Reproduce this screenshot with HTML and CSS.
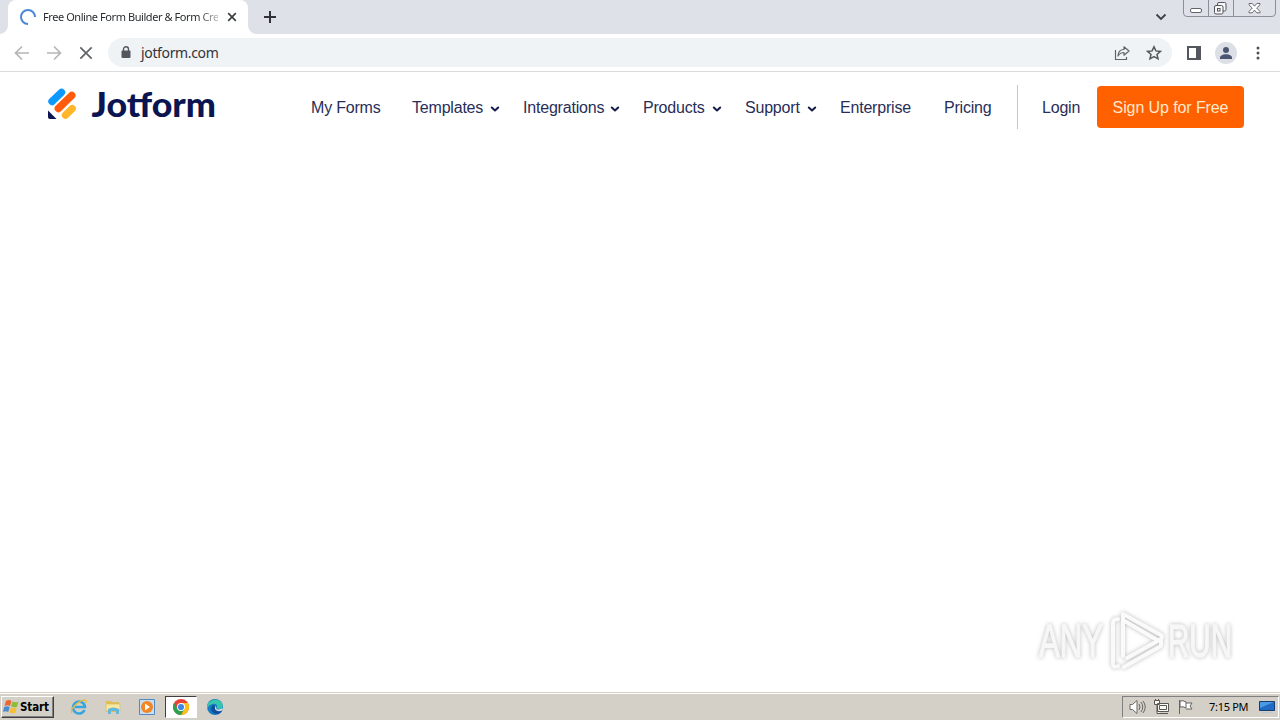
FILE: index.html
```html
<!DOCTYPE html>
<html lang="en"><head><meta charset="utf-8"><title>Jotform</title><link rel="stylesheet" href="styles.css"></head>
<body>
<div class="desktop">
<header class="tabs">
  <div class="tab">
    <svg class="spinner" width="18" height="18" viewBox="0 0 18 18"><path d="M9 16A7 7 0 1 1 16 9" fill="none" stroke="#4b87d9" stroke-width="2"/></svg>
    <span class="tab-title">Free Online Form Builder &amp; Form Cre</span>
    <svg width="10" height="10" viewBox="0 0 10 10"><path d="M1.200 1.200l7.600 7.600M8.800 1.200L1.200 8.800" stroke="#3c4043" stroke-width="1.700"/></svg>
  </div>
  <svg class="plus" width="14" height="14" viewBox="0 0 14 14"><path d="M7 1v12M1 7h12" stroke="#303238" stroke-width="2"/></svg>
  <svg class="tab-menu" width="12" height="8" viewBox="0 0 12 8"><path d="M1.500 1.500L6 6l4.500-4.500" fill="none" stroke="#3c4043" stroke-width="1.800"/></svg>
  <svg class="controls" width="94" height="18" viewBox="0 0 94 18">
    <path d="M.5 0v13q0 3.500 3.500 3.500h85q3.500 0 3.500-3.500V0M25.500 0v16M50.500 0v16" fill="none" stroke="#8b8f98"/>
    <rect x="7.500" y="8.500" width="11" height="4" rx="1.500" fill="#fff" stroke="#60646c"/>
    <g fill="#f7f7f8" stroke="#50545c"><rect x="34.500" y="2.500" width="8.500" height="8.500" rx="1.500"/><rect x="31.500" y="5.500" width="8.500" height="8.500" rx="1.500"/><rect x="34.500" y="8.500" width="2.500" height="2.500"/></g>
    <path d="M66 3.500h3.200l2.300 2.700 2.300-2.700H77v1.300L73.700 8l3.300 3.500v1.300h-3.200l-2.300-2.700-2.300 2.700H66v-1.300L69.300 8 66 4.800z" fill="#fff" stroke="#666a72"/>
  </svg>
</header>
<div class="toolbar">
  <div class="nav-buttons">
    <svg width="16" height="16" viewBox="0 0 16 16"><path d="M15 8H2M8 1.500L1.500 8 8 14.500" fill="none" stroke="#b5b6b8" stroke-width="1.700"/></svg>
    <svg width="16" height="16" viewBox="0 0 16 16"><path d="M1 8h13M8 1.500L14.500 8 8 14.500" fill="none" stroke="#b5b6b8" stroke-width="1.700"/></svg>
    <svg width="16" height="16" viewBox="0 0 16 16"><path d="M2.300 2.300l11.400 11.400M13.700 2.300L2.300 13.700" stroke="#5f6368" stroke-width="1.700"/></svg>
  </div>
  <div class="address">
    <svg width="10" height="13" viewBox="0 0 10 13"><rect x=".5" y="4.500" width="9" height="7.500" rx="1" fill="#54585e"/><path d="M2.500 5V3.200a2.500 2.500 0 0 1 5 0V5" fill="none" stroke="#54585e" stroke-width="1.400"/></svg>
    <span class="url">jotform.com</span>
    <svg class="share" width="16" height="16" viewBox="0 0 16 16"><path d="M1.500 5v9.500h11V12" fill="none" stroke="#5f6368" stroke-width="1.200"/><path d="M4 11c.3-4 2.500-6.500 6-6.500V1.800L15 6l-5 4.200V7.500c-2.800 0-4.500 1-6 3.500z" fill="none" stroke="#5f6368" stroke-width="1.200" stroke-linejoin="round"/></svg>
    <svg width="16" height="16" viewBox="0 0 16 16"><path d="M8 1.800l1.900 4.100 4.500.5-3.400 3 1 4.400L8 11.500l-4 2.300 1-4.400-3.400-3 4.500-.5z" fill="none" stroke="#54585e" stroke-width="1.500"/></svg>
  </div>
  <svg class="panel" width="14" height="14" viewBox="0 0 14 14"><path d="M1 1h12v12H1z" fill="#fff" stroke="#54585e" stroke-width="2"/><path d="M9 1h4v12H9z" fill="#54585e"/></svg>
  <svg class="avatar" width="22" height="22" viewBox="0 0 22 22"><circle cx="11" cy="11" r="11" fill="#dcdfe6"/><circle cx="11" cy="8" r="3" fill="#4b5672"/><path d="M5 16c0-5 12-5 12 0v1H5z" fill="#4b5672"/></svg>
  <svg class="dots" width="4" height="14" viewBox="0 0 4 14" fill="#4d5156"><circle cx="2" cy="2" r="1.500"/><circle cx="2" cy="7" r="1.500"/><circle cx="2" cy="12" r="1.500"/></svg>
</div>
<main class="page">
  <div class="site-header">
    <svg class="logo" width="170" height="46" viewBox="0 -2 170 46">
      <g stroke-width="7.400" stroke-linecap="round"><path d="M4 15.500L13.500 6.300" stroke="#0a99ff"/><path d="M10.300 22.500L23.800 9.300" stroke="#ff5b0a"/><path d="M17.500 29.200L24.200 22.700" stroke="#ffb629"/></g><path d="M0 24.500L8.500 33H2q-2 0-2-2z" fill="#0a1551"/>
      <text x="43.500" y="31" class="wordmark" textLength="124.500" lengthAdjust="spacingAndGlyphs">Jotform</text>
    </svg>
    <nav class="links">
      <a class="w-forms">My Forms</a>
      <a class="w-templates">Templates<svg width="10" height="7" viewBox="0 0 10 7"><path d="M1.800 1.500L5 4.500l3.200-3"/></svg></a>
      <a class="w-integrations">Integrations<svg width="10" height="7" viewBox="0 0 10 7"><path d="M1.800 1.500L5 4.500l3.200-3"/></svg></a>
      <a class="w-products">Products<svg width="10" height="7" viewBox="0 0 10 7"><path d="M1.800 1.500L5 4.500l3.200-3"/></svg></a>
      <a class="w-support">Support<svg width="10" height="7" viewBox="0 0 10 7"><path d="M1.800 1.500L5 4.500l3.200-3"/></svg></a>
      <a class="w-enterprise">Enterprise</a>
      <a class="w-pricing">Pricing</a>
    </nav>
    <span class="divider"></span><a class="login">Login</a><a class="signup">Sign Up for Free</a>
  </div>
  <svg class="watermark" width="214" height="76" viewBox="0 0 214 76">
    <g class="mark-text"><text x="7" y="56" textLength="64" lengthAdjust="spacingAndGlyphs">ANY</text><text x="136" y="56" textLength="64" lengthAdjust="spacingAndGlyphs">RUN</text></g>
    <g class="mark-play"><path d="M91 55V13l38 21q2 2 0 4L95 57"/><path d="M91 19l34 20"/><path d="M86 18q-5 0-5 4v41q0 4 5 2"/><path d="M92 66l37-21v-5"/></g>
  </svg>
</main>
<footer class="taskbar">
  <div class="start">
    <svg width="17" height="16" viewBox="0 0 17 16"><path d="M3 2q3-2 5.500 0L7 7Q4.500 5.500 1.500 7z" fill="#ed6537"/><path d="M9.500 2.500q3 1.500 6 .2L14 7.800q-3 1.200-6-.3z" fill="#8ebc35"/><path d="M1.200 8q3-1.500 5.500 0l-1.500 5Q2.500 11.500 0 13z" fill="#478bd0"/><path d="M7.700 8.500q3 1.500 6 .2l-1.500 5q-3 1.200-6-.3z" fill="#f7bf35"/></svg><span>Start</span>
  </div>
  <div class="apps">
    <span><svg width="18" height="18" viewBox="0 0 18 18"><path d="M14.500 12A6 6 0 1 1 15 9H5" fill="none" stroke="#37a5de" stroke-width="2.600"/><path d="M2 15C-1 12 8 3 14 2q3 0 2 3" fill="none" stroke="#e5bb43" stroke-width="1.300"/></svg></span>
    <span><svg width="18" height="18" viewBox="0 0 18 18"><path d="M2 3h5l1 1h7v10H2z" fill="#e4bd59"/><path d="M2 6h14v7H2z" fill="#f7e8a0" stroke="#d1b75c" stroke-width=".6"/><path d="M4 16v-5q5-3 11 0v5h-3v-3H7v3z" fill="#65b7dc"/></svg></span>
    <span><svg width="18" height="18" viewBox="0 0 18 18"><path d="M1.500 1.500h15v15h-15z" fill="#c9def1" stroke="#528bc1"/><circle cx="9" cy="9" r="6" fill="#f18622"/><path d="M7 5.500v7l5-3.500z" fill="#fff"/></svg></span>
    <span class="active"><svg width="18" height="18" viewBox="0 0 18 18"><circle cx="9" cy="9" r="8" fill="#e84335"/><path d="M2.070 5A8 8 0 0 0 9 17l3.500-6H5.500z" fill="#2ca24c"/><path d="M9 17A8 8 0 0 0 15.930 5H9l3.500 6z" fill="#fbc116"/><circle cx="9" cy="9" r="4" fill="#fff"/><circle cx="9" cy="9" r="3.100" fill="#4285e8"/></svg></span>
    <span><svg width="18" height="18" viewBox="0 0 18 18"><circle cx="9" cy="9" r="8" fill="#167cc4"/><path d="M1 8C2 1 14-1 16.500 6c1.500 5-4 6-6 4 2-3-1-5-4-4-3 .5-5 3-5.500 6z" fill="#38c5ad"/><path d="M7 7c-4 4-1 9 4 9 2 0 4-1 5-3-4 1-8-1-7-5z" fill="#114f9c"/><path d="M9.500 8c1 1 .5 2 1 3 2 1 4 .5 6-1v2q-3 2-6 .5Q8 11 9.500 8z" fill="#d8dfe0"/></svg></span>
  </div>
  <div class="tray">
    <svg width="17" height="16" viewBox="0 0 17 16" fill="#fff" stroke="#6a6966"><path d="M1 5.500h2.500L8 1.500v13L3.500 10.500H1z"/><path d="M10 5q2 3 0 6M12 3q3.500 5 0 10M14 2q4.500 6 0 12" fill="none"/></svg>
    <svg width="17" height="16" viewBox="0 0 17 16" fill="#f8f8f4" stroke="#585754"><path d="M4.500 4.500h11v8h-11zM6 14.500h9M6.500 6.500h7v4h-7zM1.500 1.500h5v4h-5zM4 6v8.500h3M2.500 0v2M5.500 0v2"/></svg>
    <svg width="17" height="16" viewBox="0 0 17 16" fill="#fff" stroke="#64635f"><path d="M2.500 1v14"/><path d="M3 2q3-1 6 1v6q-3-2-6-1zM9 4h6l-2 3 2 3H9"/></svg>
    <time>7:15 PM</time>
    <svg class="screen" width="16" height="14" viewBox="0 0 16 14"><path d="M.5 1.500h15v9H.5z" fill="#226bc5" stroke="#173d70"/><path d="M1 2h14L1 8z" fill="#4a9ae6"/><path d="M3 12.500h10" stroke="#b8c8d8"/></svg>
  </div>
</footer>
</div>
</body></html>
```
FILE: styles.css
```css
* { box-sizing: border-box; }
body { margin: 0; font-family: "Liberation Sans", Arial, sans-serif; }
svg { display: block; flex: none; }
.desktop { width: 1280px; height: 720px; display: flex; flex-direction: column; overflow: hidden; background: #fff; }
.tabs { height: 34px; flex: none; background: #dee1e8; display: flex; align-items: center; padding-left: 8px; }
.tab { width: 240px; height: 34px; padding: 0 11px; background: #fff; border-radius: 8px 8px 0 0; display: flex; align-items: center; position: relative; }
.tab::before, .tab::after { content: ""; position: absolute; bottom: 0; width: 8px; height: 8px; }
.tab::before { left: -8px; background: radial-gradient(circle at 0 0, transparent 7.5px, #fff 8px); }
.tab::after { right: -8px; background: radial-gradient(circle at 8px 0, transparent 7.5px, #fff 8px); }
.tab-title { width: 175px; margin: 0 9px 0 6px; white-space: nowrap; font: 11px/18px "Noto Sans", sans-serif; letter-spacing: -.43px; color: #292c30; -webkit-mask-image: linear-gradient(90deg, #000 154px, #0005 174px); }
.plus { margin-left: 15px; }
.tab-menu { margin-left: auto; }
.controls { margin-left: 16px; margin-right: 3px; align-self: flex-start; }
.toolbar { height: 38px; flex: none; display: flex; align-items: center; border-bottom: 1px solid #dadbdc; padding: 0 20px 0 14px; }
.nav-buttons { display: flex; gap: 16px; width: 94px; }
.address { width: 1064px; height: 29px; border-radius: 15px; background: #f0f3f5; display: flex; align-items: center; padding: 0 10px 0 13px; }
.url { margin-left: 10px; font: 14px/20px "Noto Sans", sans-serif; letter-spacing: -.35px; color: #303438; }
.share { margin-left: auto; margin-right: 16px; }
.panel { margin-left: 15px; }
.avatar { margin-left: 14px; }
.dots { margin-left: auto; }
.page { flex: 1; min-height: 0; position: relative; }
.site-header { display: flex; align-items: center; height: 70px; padding-left: 48px; color: #282e58; font-size: 16px; letter-spacing: -.2px; }
.logo { margin-right: 93px; }
.wordmark { font: 900 34px Lato, sans-serif; fill: #0a1551; letter-spacing: 0; }
.links { display: flex; width: 706px; }
.links a { display: flex; align-items: center; justify-content: space-between; white-space: nowrap; line-height: 20px; padding-top: 1px; }
.links svg { margin-top: 4px; fill: none; stroke: #151c4b; stroke-width: 2; stroke-linecap: round; stroke-linejoin: round; }
.w-forms { width: 69px; margin-right: 32px; }
.w-templates { width: 88px; margin-right: 23px; }
.w-integrations { width: 97px; margin-right: 23px; }
.w-products { width: 79px; margin-right: 23px; }
.w-support { width: 72px; margin-right: 23px; }
.w-enterprise { width: 72px; margin-right: 32px; }
.w-pricing { width: 49px; }
.divider { width: 1px; height: 44px; background: #c4c5cb; }
.login { width: 55px; margin-left: 24px; padding-top: 2px; }
.signup { width: 147px; height: 42px; border-radius: 4px; background: #ff6100; color: #ffe9cf; text-align: center; line-height: 43px; letter-spacing: -.1px; }
.watermark { position: absolute; right: 34px; bottom: 15px; filter: drop-shadow(0 0 2px #bbb); }
.mark-text { font: 46px "Liberation Sans", sans-serif; fill: #f7f7f7; stroke: #f7f7f7; stroke-width: 1.4; }
.mark-play { fill: none; stroke: #fafafa; stroke-width: 4; stroke-linejoin: round; stroke-linecap: round; }
.taskbar { height: 28px; flex: none; display: flex; align-items: center; background: #d4d0c8; border-top: 1px solid #d4d0c8; box-shadow: inset 0 1px #fff; padding: 2px 1px; }
.start { width: 53px; height: 22px; border: 1px solid; border-color: #fff #404040 #404040 #fff; box-shadow: inset -1px -1px #808080; display: flex; align-items: center; padding-left: 1px; font: bold 11.5px "DejaVu Sans Condensed", "DejaVu Sans", sans-serif; letter-spacing: -.1px; color: #000; }
.apps { display: flex; gap: 2px; margin-left: 9px; }
.apps span { width: 32px; height: 22px; display: flex; align-items: center; justify-content: center; }
.apps .active { background: #fff; border: 1px solid; border-color: #404040 #fff #fff #404040; }
.tray { width: 157px; height: 22px; margin-left: auto; border: 1px solid; border-color: #808080 #fff #fff #808080; display: flex; align-items: center; gap: 7px; padding-left: 6px; }
.tray time { margin-left: 8px; width: 43px; white-space: nowrap; font: 11px "Noto Sans", sans-serif; letter-spacing: -.3px; color: #000; }
.screen { margin-left: 0; }
```
